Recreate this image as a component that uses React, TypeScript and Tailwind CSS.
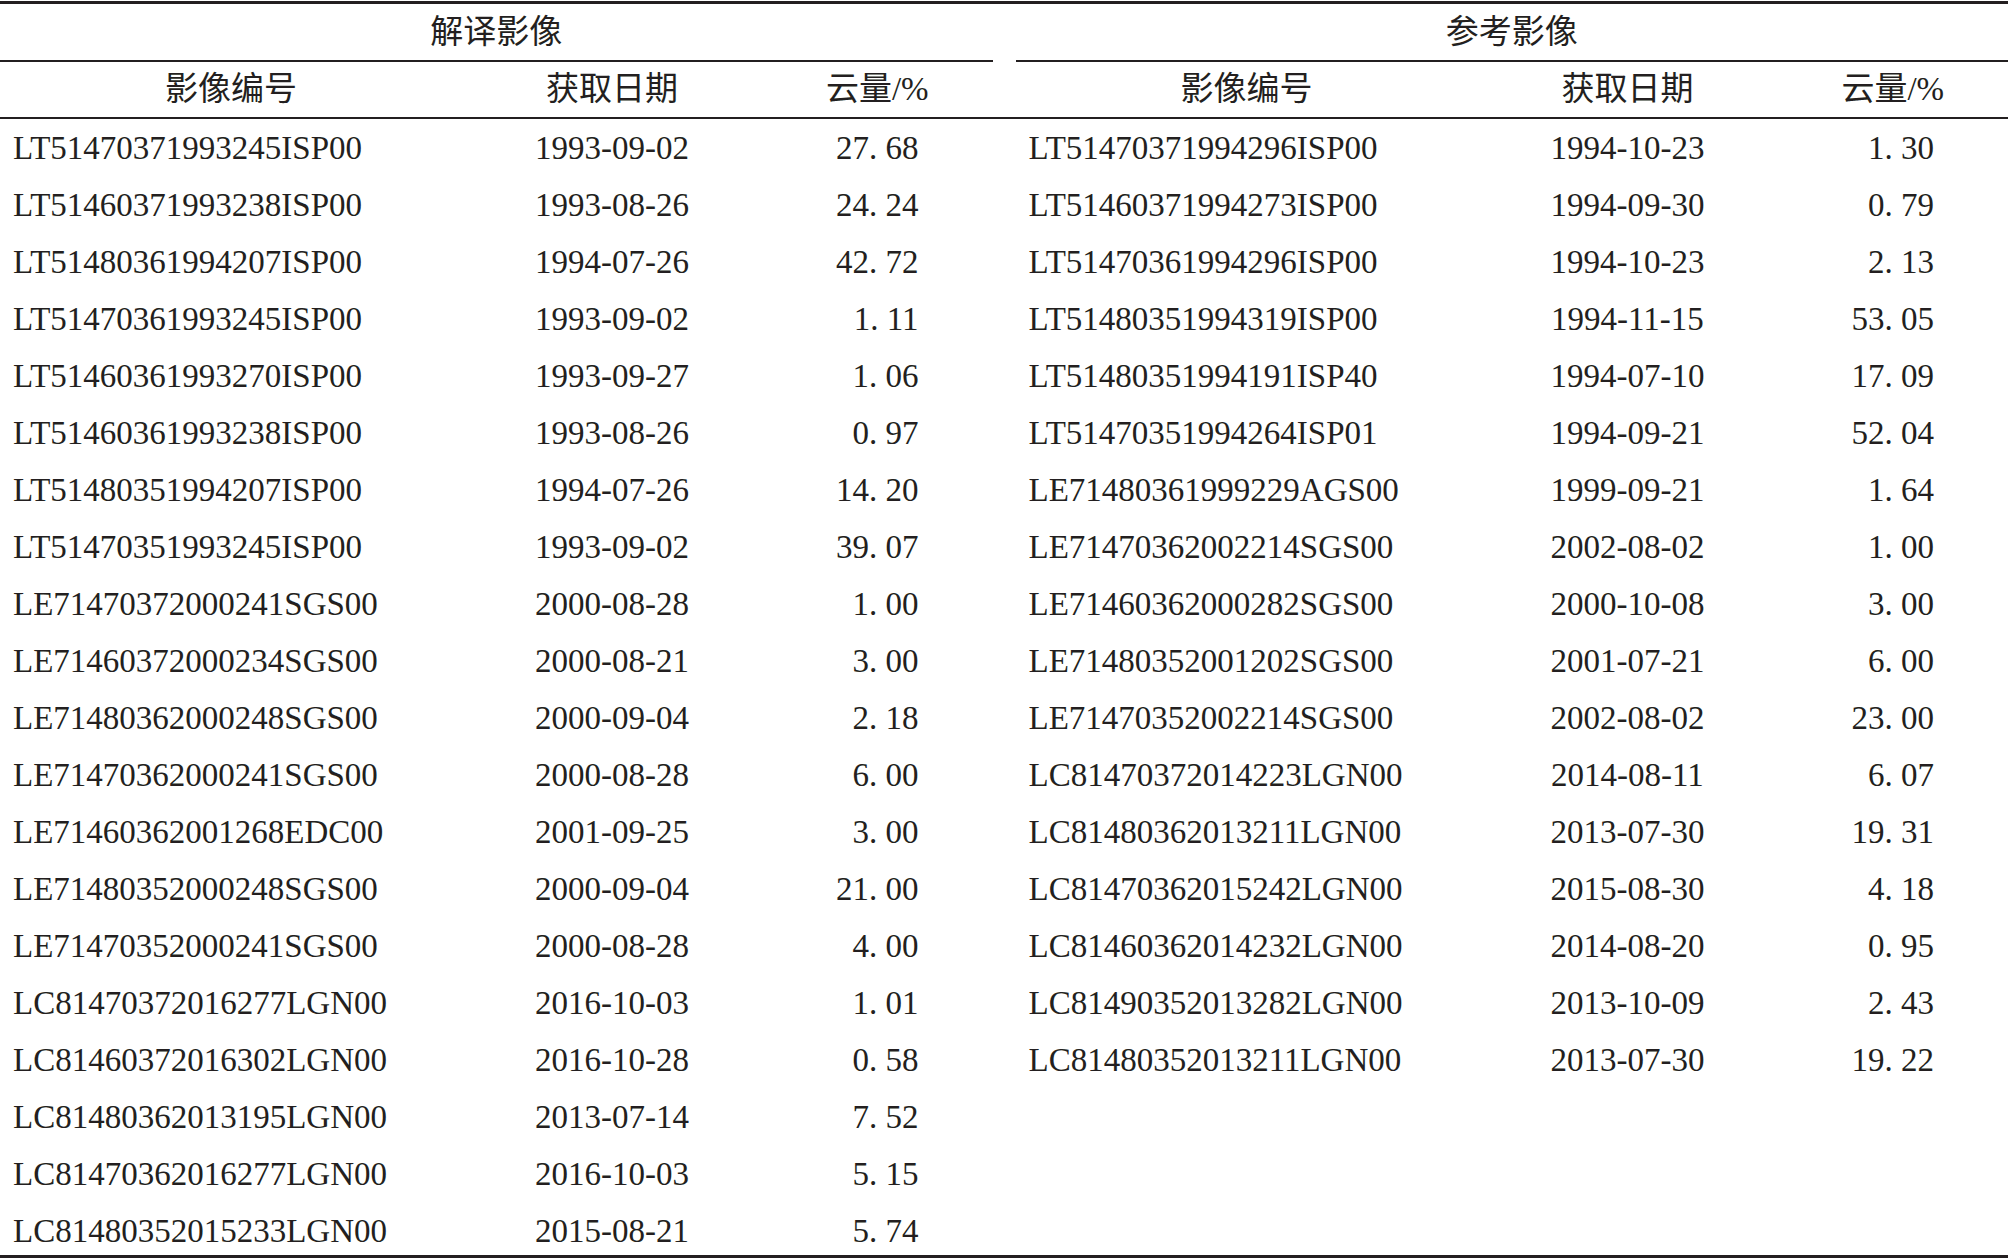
type Row = [string, string, string]

const interpreted: Row[] = [
  ['LT51470371993245ISP00', '1993-09-02', '27. 68'],
  ['LT51460371993238ISP00', '1993-08-26', '24. 24'],
  ['LT51480361994207ISP00', '1994-07-26', '42. 72'],
  ['LT51470361993245ISP00', '1993-09-02', '1. 11'],
  ['LT51460361993270ISP00', '1993-09-27', '1. 06'],
  ['LT51460361993238ISP00', '1993-08-26', '0. 97'],
  ['LT51480351994207ISP00', '1994-07-26', '14. 20'],
  ['LT51470351993245ISP00', '1993-09-02', '39. 07'],
  ['LE71470372000241SGS00', '2000-08-28', '1. 00'],
  ['LE71460372000234SGS00', '2000-08-21', '3. 00'],
  ['LE71480362000248SGS00', '2000-09-04', '2. 18'],
  ['LE71470362000241SGS00', '2000-08-28', '6. 00'],
  ['LE71460362001268EDC00', '2001-09-25', '3. 00'],
  ['LE71480352000248SGS00', '2000-09-04', '21. 00'],
  ['LE71470352000241SGS00', '2000-08-28', '4. 00'],
  ['LC81470372016277LGN00', '2016-10-03', '1. 01'],
  ['LC81460372016302LGN00', '2016-10-28', '0. 58'],
  ['LC81480362013195LGN00', '2013-07-14', '7. 52'],
  ['LC81470362016277LGN00', '2016-10-03', '5. 15'],
  ['LC81480352015233LGN00', '2015-08-21', '5. 74'],
]

const reference: Row[] = [
  ['LT51470371994296ISP00', '1994-10-23', '1. 30'],
  ['LT51460371994273ISP00', '1994-09-30', '0. 79'],
  ['LT51470361994296ISP00', '1994-10-23', '2. 13'],
  ['LT51480351994319ISP00', '1994-11-15', '53. 05'],
  ['LT51480351994191ISP40', '1994-07-10', '17. 09'],
  ['LT51470351994264ISP01', '1994-09-21', '52. 04'],
  ['LE71480361999229AGS00', '1999-09-21', '1. 64'],
  ['LE71470362002214SGS00', '2002-08-02', '1. 00'],
  ['LE71460362000282SGS00', '2000-10-08', '3. 00'],
  ['LE71480352001202SGS00', '2001-07-21', '6. 00'],
  ['LE71470352002214SGS00', '2002-08-02', '23. 00'],
  ['LC81470372014223LGN00', '2014-08-11', '6. 07'],
  ['LC81480362013211LGN00', '2013-07-30', '19. 31'],
  ['LC81470362015242LGN00', '2015-08-30', '4. 18'],
  ['LC81460362014232LGN00', '2014-08-20', '0. 95'],
  ['LC81490352013282LGN00', '2013-10-09', '2. 43'],
  ['LC81480352013211LGN00', '2013-07-30', '19. 22'],
]

function GroupTitle({ title }: { title: string }) {
  return (
    <div className="flex-1 flex flex-col">
      <div className="h-[56px] flex items-center justify-center">{title}</div>
      <div className="h-[2px] bg-[#231f20]" />
    </div>
  )
}

function ColumnHeads() {
  return (
    <div className="flex-1 grid grid-cols-[462px_300px_1fr] h-[55px] items-center text-center">
      <div>影像编号</div>
      <div>获取日期</div>
      <div>云量/%</div>
    </div>
  )
}

function Body({ rows }: { rows: Row[] }) {
  return (
    <div className="flex-1 flex flex-col">
      {rows.map((r) => (
        <div key={r[0]} className="shrink-0 grid grid-cols-[462px_300px_1fr] h-[57px] pt-[2px] items-center whitespace-pre">
          <div className="pl-[13px]">{r[0]}</div>
          <div className="text-center">{r[1]}</div>
          <div className="text-right pr-[74px]">{r[2]}</div>
        </div>
      ))}
    </div>
  )
}

export default function App() {
  return (
    <div className="w-[2008px] h-[1258px] bg-white text-[#231f20] text-[33px] leading-none font-['Liberation_Serif','Noto_Sans_CJK_SC',serif] flex flex-col overflow-hidden">
      <div className="mt-[1px] h-[3px] bg-[#231f20]" />
      <div className="flex gap-[23px]">
        <GroupTitle title="解译影像" />
        <GroupTitle title="参考影像" />
      </div>
      <div className="flex gap-[23px]">
        <ColumnHeads />
        <ColumnHeads />
      </div>
      <div className="h-[2px] bg-[#231f20]" />
      <div className="h-[1136px] shrink-0 flex gap-[23px]">
        <Body rows={interpreted} />
        <Body rows={reference} />
      </div>
      <div className="h-[3px] bg-[#231f20]" />
    </div>
  )
}
